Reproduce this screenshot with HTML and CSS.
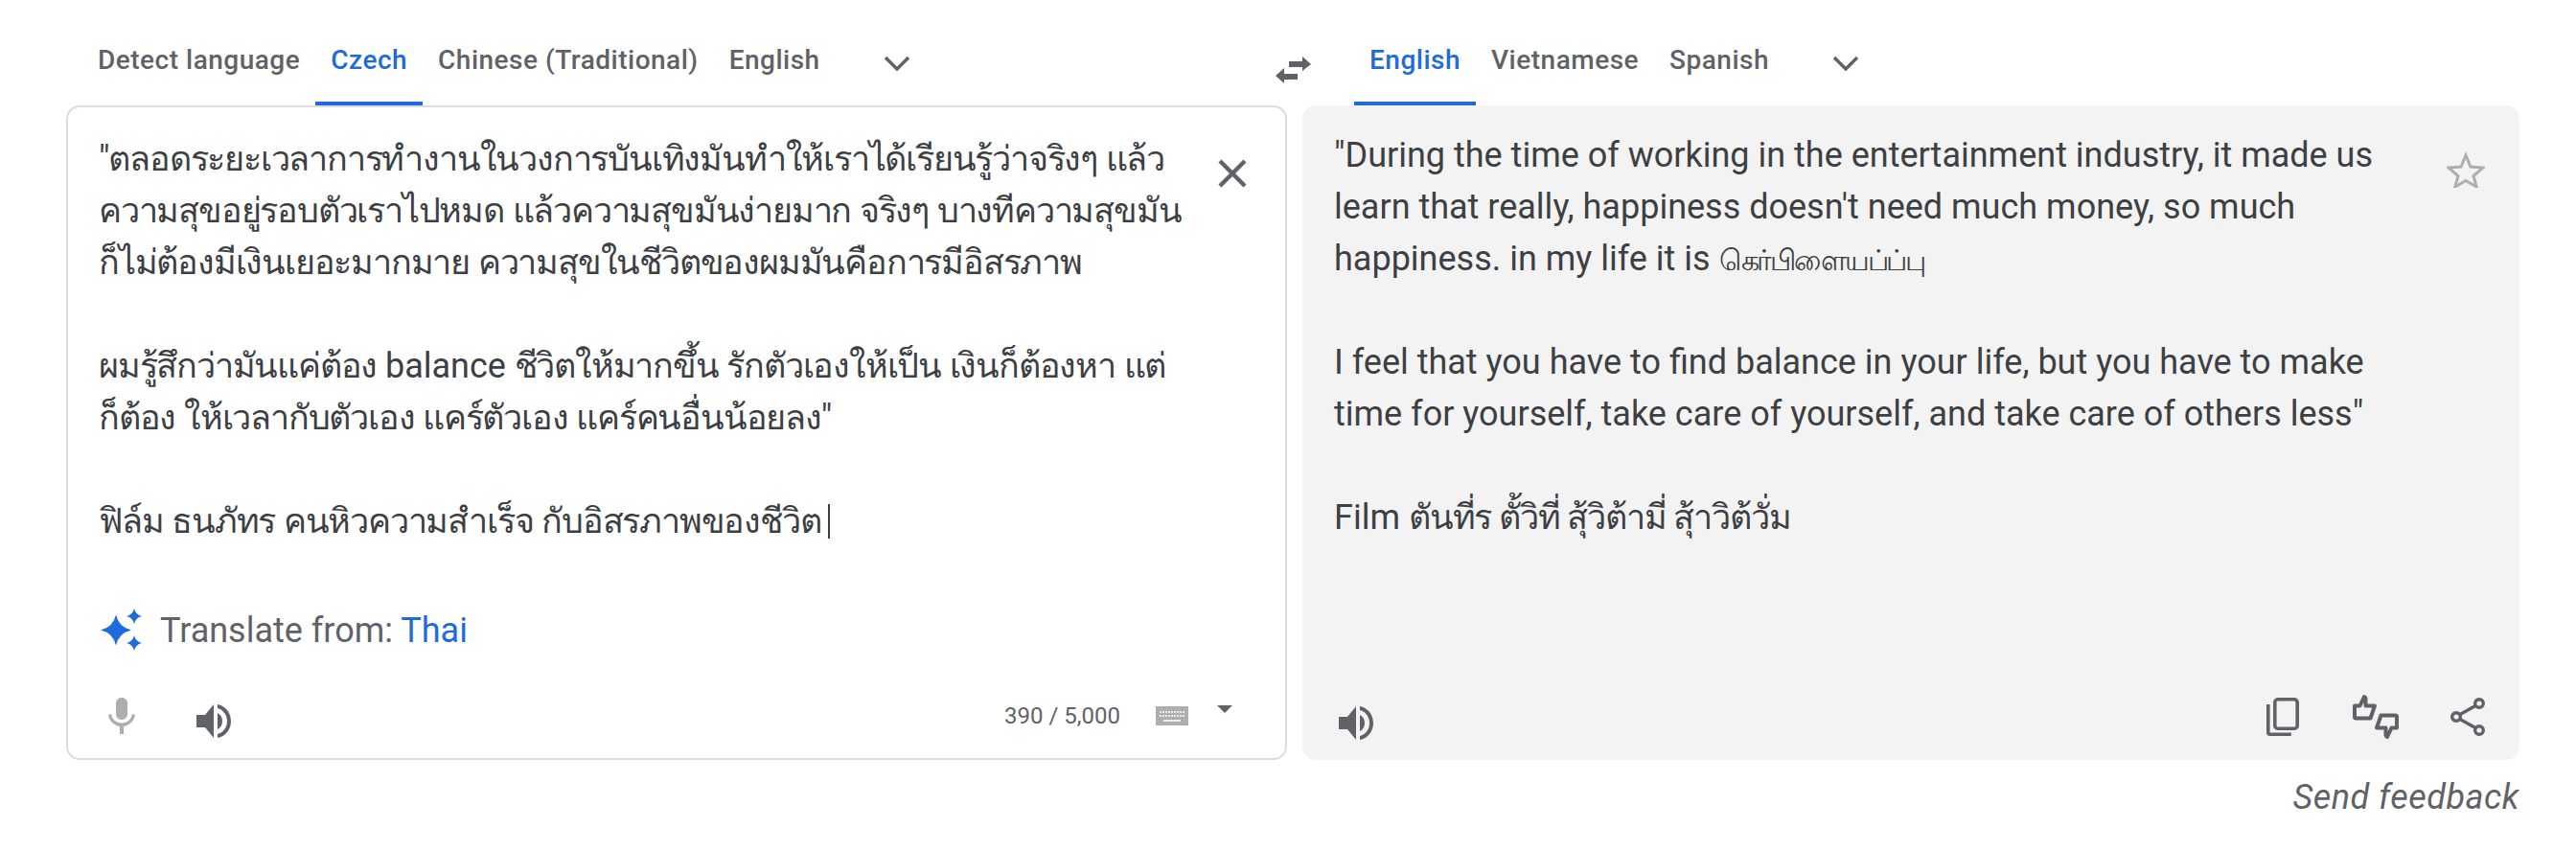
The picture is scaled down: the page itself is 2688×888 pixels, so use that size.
FILE: index.html
```html
<!DOCTYPE html>
<html lang="en">
<head>
<meta charset="utf-8">
<title>Translate</title>
<link rel="stylesheet" href="styles.css">
</head>
<body>
<main class="page">
  <div class="col col-left">
    <nav class="tabs tabs-left">
      <span class="tab">Detect language</span>
      <span class="tab active">Czech</span>
      <span class="tab">Chinese (Traditional)</span>
      <span class="tab">English</span>
      <svg class="chev" viewBox="0 0 28 16"><path d="M2 2l12 12L26 2" fill="none" stroke="#5f6368" stroke-width="3.4"/></svg>
      <svg class="swap" viewBox="0 0 40 30"><path fill="#5f6368" d="M15 6h14V1l9 8-9 7v-4H15zM24 19v6H10v4l-9-8 9-8v6z"/></svg>
    </nav>
    <section class="card card-src">
      <div class="body">
        <p class="text text-src">"ตลอดระยะเวลาการทำงานในวงการบันเทิงมันทำให้เราได้เรียนรู้ว่าจริงๆ แล้ว<br>ความสุขอยู่รอบตัวเราไปหมด แล้วความสุขมันง่ายมาก จริงๆ บางทีความสุขมัน<br>ก็ไม่ต้องมีเงินเยอะมากมาย ความสุขในชีวิตของผมมันคือการมีอิสรภาพ<br><br>ผมรู้สึกว่ามันแค่ต้อง <span class="latin">balance</span> ชีวิตให้มากขึ้น รักตัวเองให้เป็น เงินก็ต้องหา แต่<br>ก็ต้อง ให้เวลากับตัวเอง แคร์ตัวเอง แคร์คนอื่นน้อยลง"<br><br>ฟิล์ม ธนภัทร คนหิวความสำเร็จ กับอิสรภาพของชีวิต<span class="caret"></span></p>
        <svg class="close" viewBox="0 0 30 30"><path d="M2 2l26 26M28 2L2 28" fill="none" stroke="#5f6368" stroke-width="4.4"/></svg>
      </div>
      <div class="detect">
        <svg class="spark" viewBox="0 0 46 46"><path fill="#1f6bdc" d="M18 6.500Q21 19.500 34 22.500Q21 25.500 18 38.500Q15 25.500 2 22.500Q15 19.500 18 6.500zM37 0Q38.500 6.500 45 8Q38.500 9.500 37 16Q35.500 9.500 29 8Q35.500 6.500 37 0zM37 28Q38.500 34.500 45 36Q38.500 37.500 37 44Q35.500 37.500 29 36Q35.500 34.500 37 28z"/></svg>
        <span>Translate from: <span class="link">Thai</span></span>
      </div>
      <div class="tools">
        <svg class="mic" viewBox="0 0 28 38"><path fill="#aeaeae" d="M14 0c3.600 0 6 2.500 6 6v11c0 3.500-2.400 6-6 6s-6-2.500-6-6V6c0-3.500 2.400-6 6-6z"/><path fill="#aeaeae" d="M0 17.500h3.400c.6 5.500 5 9 10.600 9s10-3.500 10.600-9H28c-.7 6.600-5.500 11.500-12 12.500v8h-4v-8C5.500 29 .7 24.100 0 17.500z"/></svg>
        <svg class="spk spk-src" viewBox="0 0 36 35"><path fill="#5f6368" d="M0 11h9l9-11v35l-9-11H0zM22 9c3.400 1.500 5 4.800 5 8.500s-1.600 7-5 8.500z"/><path fill="#5f6368" d="M22 0c8.400 1.600 14 8.800 14 17.500S30.400 33.400 22 35v-4c6-1.500 10-7 10-13.500S28 5.500 22 4z"/></svg>
        <span class="count">390 / 5,000</span>
        <svg class="kbd" viewBox="0 0 34 20"><rect width="34" height="20" fill="#aeaeae"/><g fill="none" stroke="#fff" stroke-width="1.600"><path stroke-dasharray="2 1" d="M4 6h26M4 10h26"/><path d="M8 15h18"/></g></svg>
        <svg class="tri" viewBox="0 0 16 8"><path d="M0 0h16L8 8z" fill="#5f6368"/></svg>
      </div>
    </section>
  </div>
  <div class="col col-right">
    <nav class="tabs tabs-right">
      <span class="tab active">English</span>
      <span class="tab">Vietnamese</span>
      <span class="tab">Spanish</span>
      <svg class="chev" viewBox="0 0 28 16"><path d="M2 2l12 12L26 2" fill="none" stroke="#5f6368" stroke-width="3.4"/></svg>
    </nav>
    <section class="card card-dst">
      <div class="body">
        <p class="text text-dst">"During the time of working in the entertainment industry, it made us<br>learn that really, happiness doesn't need much money, so much<br>happiness. in my life it is <span class="tamil" lang="ta">கெர்பிளையப்ப்பு</span><br><br>I feel that you have to find balance in your life, but you have to make<br>time for yourself, take care of yourself, and take care of others less"<br><br>Film <span class="thai">ตันที่ร ตั้วิที่ สุ้วิต้ามี่ สุ้าวิต้วั่ม</span></p>
        <svg class="star" viewBox="0 0 40 38"><path d="M20 4l5 12 13 1-10 8.500 3.200 11.500L20 30.500 8.800 37 12 25.500 2 17l13-1z" fill="none" stroke="#aeaeae" stroke-width="3"/></svg>
      </div>
      <div class="tools tools-dst">
        <svg class="spk spk-dst" viewBox="0 0 36 35"><path fill="#5f6368" d="M0 11h9l9-11v35l-9-11H0zM22 9c3.400 1.500 5 4.800 5 8.500s-1.600 7-5 8.500z"/><path fill="#5f6368" d="M22 0c8.400 1.600 14 8.800 14 17.500S30.400 33.400 22 35v-4c6-1.500 10-7 10-13.500S28 5.500 22 4z"/></svg>
        <svg class="copy" viewBox="0 0 34 40"><path fill="none" stroke="#5f6368" stroke-width="3.600" d="M12 1.800h17a3 3 0 0 1 3.200 3.200v24a3 3 0 0 1-3.200 3.200H12A3 3 0 0 1 8.800 29V5A3 3 0 0 1 12 1.800z"/><path fill="none" stroke="#5f6368" stroke-width="3.600" d="M1.800 7v29.200a2 2 0 0 0 2 2h22"/></svg>
        <svg class="thumbs" viewBox="0 0 48 48"><path fill="none" stroke="#5f6368" stroke-width="4" stroke-linejoin="round" d="M2 12.500h5.500L12 3l1.500 1.500v8H23L18.500 25.500H3.500A1.500 1.500 0 0 1 2 24z"/><path fill="none" stroke="#5f6368" stroke-width="4" stroke-linejoin="round" transform="rotate(180 24 24)" d="M2 12.500h5.500L12 3l1.500 1.500v8H23L18.500 25.500H3.500A1.500 1.500 0 0 1 2 24z"/></svg>
        <svg class="share" viewBox="0 0 36 40"><g fill="none" stroke="#5f6368" stroke-width="3.400"><circle cx="6" cy="20" r="4.300"/><circle cx="30" cy="6" r="4.300"/><circle cx="30" cy="34" r="4.300"/><path d="M10 17.500L26 8.500M10 22.500l16 9"/></g></svg>
      </div>
    </section>
    <div class="feedback">Send feedback</div>
  </div>
</main>
</body>
</html>
```

FILE: styles.css
```css
* { box-sizing: border-box; }
html, body { margin: 0; padding: 0; background: #fff; }
body { width: 2688px; height: 888px; overflow: hidden; font-family: Roboto, "Noto Sans", "Liberation Sans", sans-serif; color: #3c4043; }
.page { display: flex; padding-left: 69px; align-items: flex-start; gap: 16px; }
.col { display: flex; flex-direction: column; }
.col-left { width: 1274px; }
.col-right { width: 1270px; }
.tabs { display: flex; height: 110px; align-items: flex-start; font-size: 28px; font-weight: 500; letter-spacing: .5px; color: #5f6368; }
.tabs-left { padding-left: 17px; }
.tabs-right { padding-left: 54px; }
.tab { padding: 0 16px; height: 110px; line-height: 126px; white-space: nowrap; }
.tab.active { color: #1f6bdc; border-bottom: 4px solid #1f6bdc; }
.chev { width: 28px; height: 16px; margin: 58px 0 0 50px; flex: none; }
.swap { width: 40px; height: 30px; margin: 58px -27px 0 auto; flex: none; }
.card { height: 683px; border-radius: 14px; display: flex; flex-direction: column; }
.card-src { background: #fff; border: 2px solid #dadce0; padding: 0 40px 0 32px; }
.card-dst { background: #f3f3f3; padding: 0 36px 0 33px; }
.body { display: flex; justify-content: space-between; height: 523px; }
.text { margin: 0; font-size: 36px; line-height: 54px; white-space: nowrap; color: #3c4043; }
.text-src { padding-top: 27px; letter-spacing: -1.2px; word-spacing: 1px; }
.text-dst { padding-top: 25px; }
.latin { letter-spacing: 0; }
.thai { letter-spacing: -1.15px; line-height: 0; }
.tamil { font-size: 30px; letter-spacing: -2.2px; line-height: 0; }
.caret { display: inline-block; width: 2px; height: 36px; background: #3c4043; margin-left: 8px; vertical-align: -6px; }
.close { width: 30px; height: 30px; margin-top: 54px; flex: none; }
.star { width: 40px; height: 38px; margin-top: 48px; flex: none; }
.detect { display: flex; align-items: center; gap: 18px; font-size: 36px; color: #5f6368; height: 46px; }
.spark { width: 46px; height: 46px; flex: none; }
.link { color: #1f6bdc; }
.tools { display: flex; align-items: center; margin-top: 44px; height: 44px; }
.mic { width: 28px; height: 38px; margin-left: 10px; flex: none; }
.spk { width: 36px; height: 35px; flex: none; }
.spk-src { margin: 10px 0 0 64px; }
.count { font-size: 24px; color: #5f6368; margin-left: auto; }
.kbd { width: 34px; height: 20px; margin-left: 37px; flex: none; }
.tri { width: 16px; height: 8px; margin: 0 15px 14px 30px; flex: none; }
.tools-dst { margin-top: 93px; }
.spk-dst { margin: 12px auto 0 5px; }
.copy { width: 34px; height: 40px; flex: none; }
.thumbs { width: 48px; height: 48px; margin-left: 56px; flex: none; }
.share { width: 36px; height: 40px; margin-left: 54px; flex: none; }
.feedback { align-self: flex-end; font-size: 36px; letter-spacing: .5px; font-style: italic; color: #5f6368; margin-top: 18px; }
```
